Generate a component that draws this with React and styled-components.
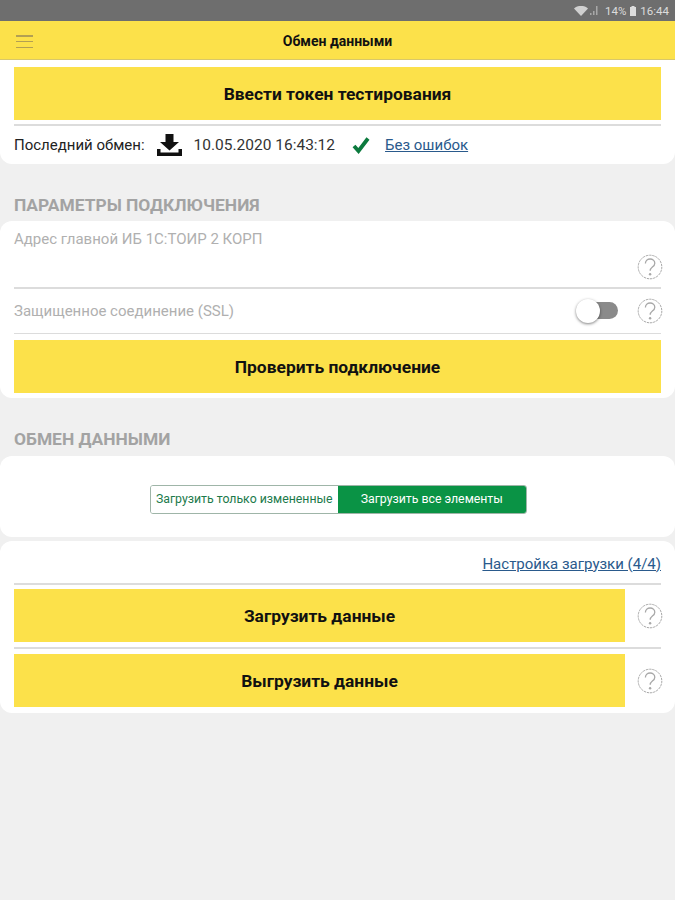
import React from 'react';
import styled, { createGlobalStyle } from 'styled-components';

const COLORS = {
  YELLOW: '#fce14a',
  PAGE: '#f0f0f0',
  LINE: '#dcdcdc',
  GREEN: '#0a9345',
  LINK: '#2a5a8c',
};

const GlobalStyle = createGlobalStyle`
  html, body {
    margin: 0;
    padding: 0;
    background: ${COLORS.PAGE};
  }
  * {
    box-sizing: border-box;
  }
  body {
    font-family: Roboto, "Liberation Sans", sans-serif;
  }
`;

const Screen = styled.div`
  width: 675px;
  height: 900px;
  overflow: hidden;
  display: flex;
  flex-direction: column;
  background: ${COLORS.PAGE};
`;

const StatusBar = styled.div`
  height: 21px;
  flex: none;
  background: #6e6e6e;
  color: #dcdcdc;
  display: flex;
  align-items: center;
  justify-content: flex-end;
  padding: 0 6px 0 0;
  font-size: 11.5px;
`;

const StatusWifi = styled.span`
  display: flex;
  margin-right: 2px;
`;

const StatusSignal = styled.span`
  display: flex;
  margin-right: 6px;
`;

const StatusBattery = styled.span`
  display: flex;
  margin: 0 4px;
`;

const Header = styled.header`
  height: 39px;
  flex: none;
  padding-top: 2px;
  background: ${COLORS.YELLOW};
  border-bottom: 1px solid #d8c76a;
  display: flex;
  align-items: center;
  justify-content: center;
  position: relative;
  font-size: 14px;
  font-weight: 700;
  color: #111;
`;

const MenuButton = styled.div`
  position: absolute;
  left: 16px;
  top: 14px;
  width: 17px;
  height: 13px;
  display: flex;
  flex-direction: column;
  justify-content: space-between;

  span {
    height: 1.5px;
    background: #b3a052;
  }
`;

const Card = styled.section`
  background: #fff;
  border-radius: ${props => props.$radius || '12px'};
  padding: ${props => props.$padding || '0 14px'};
  height: ${props => props.$height};
  margin-top: ${props => props.$top || '0'};
  flex: none;
`;

const Heading = styled.h2`
  margin: ${props => props.$margin};
  padding: 0 14px;
  height: 18px;
  line-height: 18px;
  font-size: 17.4px;
  font-weight: 700;
  color: #a3a3a3;
  flex: none;
`;

const BigButton = styled.div`
  height: 53px;
  flex: ${props => (props.$grow ? '1' : 'none')};
  background: ${COLORS.YELLOW};
  display: flex;
  align-items: center;
  justify-content: center;
  font-size: 17.4px;
  font-weight: 700;
  color: #111;
`;

const Divider = styled.div`
  height: 1.5px;
  background: ${COLORS.LINE};
  margin: ${props => props.$margin || '0'};
`;

const ExchangeRow = styled.div`
  height: 39px;
  display: flex;
  align-items: center;
  font-size: 15px;
  color: #222;
`;

const DownloadSlot = styled.span`
  display: flex;
  margin: 0 12px;
`;

const ExchangeDate = styled.span`
  margin-right: 17px;
  font-size: 15.5px;
  color: #333;
`;

const CheckSlot = styled.span`
  display: flex;
  margin-right: 15px;
`;

const TextLink = styled.span`
  font-size: 15px;
  color: ${COLORS.LINK};
  text-decoration: underline;
`;

const FieldLabel = styled.div`
  font-size: 15px;
  color: #b0b0b0;
`;

const AddressField = styled.div`
  height: 66px;
  padding-top: 9px;
  position: relative;
`;

const AddressHelp = styled.div`
  position: absolute;
  right: -2px;
  top: 33px;
`;

const SslRow = styled.div`
  height: 44px;
  display: flex;
  align-items: center;
  justify-content: space-between;
`;

const SslControls = styled.div`
  display: flex;
  align-items: center;
  gap: 19px;
  margin-right: -2px;
`;

const SwitchTrack = styled.div`
  position: relative;
  width: 32px;
  height: 17px;
  margin-left: 10px;
  border-radius: 9px;
  background: #8a8a8a;
`;

const SwitchThumb = styled.div`
  position: absolute;
  left: -10px;
  top: -3px;
  width: 24px;
  height: 24px;
  border-radius: 50%;
  background: #fff;
  box-shadow: 0 1px 3px rgba(0, 0, 0, 0.5);
`;

const SegmentWrap = styled.div`
  height: 81px;
  display: flex;
  align-items: center;
  justify-content: center;
`;

const Segment = styled.div`
  display: flex;
  width: 377px;
  height: 29px;
  margin-top: 5px;
  margin-left: 1px;
  border: 1px solid #9fb5a8;
  border-radius: 3px;
  overflow: hidden;
`;

const SegmentItem = styled.div`
  width: ${props => props.$width};
  display: flex;
  align-items: center;
  justify-content: center;
  font-size: 12.3px;
  white-space: nowrap;
  background: ${props => (props.$active ? COLORS.GREEN : '#fff')};
  color: ${props => (props.$active ? '#fff' : '#1c7a4b')};
`;

const LinkRow = styled.div`
  height: 42px;
  padding-top: 3px;
  display: flex;
  align-items: center;
  justify-content: flex-end;
`;

const ActionRow = styled.div`
  display: flex;
  align-items: center;
  gap: 12px;
  margin-right: -2px;
`;

const HelpIcon = () => (
  <svg width="26" height="26" viewBox="0 0 26 26" fill="none">
    <circle cx="13" cy="13" r="11.8" stroke="#a8a8a8" strokeWidth="1" strokeDasharray="2.4 0.8" />
    <path
      d="M8.400 9.600c0-2.700 2.100-4.600 4.700-4.600s4.700 1.800 4.700 4.200c0 1.900-1.100 2.900-2.400 3.900-1.400 1.100-2.200 1.900-2.200 3.700"
      stroke="#a8a8a8"
      strokeWidth="1.300"
    />
    <circle cx="13.100" cy="20.300" r="1.200" fill="#a8a8a8" />
  </svg>
);

const DownloadIcon = () => (
  <svg width="25" height="22" viewBox="0 0 25 22" fill="#111">
    <path d="M8.500 0h8v8h5.500l-9.500 8.500L3 8h5.500z" />
    <path d="M0 15h3.500v3.500h18V15H25v7H0z" />
  </svg>
);

const CheckIcon = () => (
  <svg width="18" height="17" viewBox="0 0 18 17" fill="none">
    <path d="M2 9l4.500 5L16 1.500" stroke="#0c7a3e" strokeWidth="3.800" />
  </svg>
);

const WifiIcon = () => (
  <svg width="14" height="10" viewBox="0 0 14 10" fill="#d0d0d0">
    <path d="M0 2.500C4-1 10-1 14 2.500L7 10z" />
  </svg>
);

const SignalIcon = () => (
  <svg width="9" height="9" viewBox="0 0 9 9" fill="#a8a8a8">
    <path d="M0 7h1.500v2H0zM3 5h1.500v4H3zM6 0h1.500v9H6z" />
  </svg>
);

const BatteryIcon = () => (
  <svg width="6" height="10" viewBox="0 0 6 10" fill="#dcdcdc">
    <path d="M1.500 0h3v1H6v9H0V1h1.500z" />
  </svg>
);

export default function App() {
  return (
    <Screen>
      <GlobalStyle />
      <StatusBar>
        <StatusWifi><WifiIcon /></StatusWifi>
        <StatusSignal><SignalIcon /></StatusSignal>
        <span>14%</span>
        <StatusBattery><BatteryIcon /></StatusBattery>
        <span>16:44</span>
      </StatusBar>
      <Header>
        <MenuButton>
          <span />
          <span />
          <span />
        </MenuButton>
        Обмен данными
      </Header>

      <Card $radius="0 0 12px 12px" $height="104px" $padding="7px 14px 0">
        <BigButton>Ввести токен тестирования</BigButton>
        <Divider $margin="4px 0 0" />
        <ExchangeRow>
          Последний обмен:
          <DownloadSlot><DownloadIcon /></DownloadSlot>
          <ExchangeDate>10.05.2020 16:43:12</ExchangeDate>
          <CheckSlot><CheckIcon /></CheckSlot>
          <TextLink>Без ошибок</TextLink>
        </ExchangeRow>
      </Card>

      <Heading $margin="32px 0 7px">ПАРАМЕТРЫ ПОДКЛЮЧЕНИЯ</Heading>

      <Card $height="177px">
        <AddressField>
          <FieldLabel>Адрес главной ИБ 1С:ТОИР 2 КОРП</FieldLabel>
          <AddressHelp>
            <HelpIcon />
          </AddressHelp>
        </AddressField>
        <Divider />
        <SslRow>
          <FieldLabel>Защищенное соединение (SSL)</FieldLabel>
          <SslControls>
            <SwitchTrack>
              <SwitchThumb />
            </SwitchTrack>
            <HelpIcon />
          </SslControls>
        </SslRow>
        <Divider $margin="0 0 6px" />
        <BigButton>Проверить подключение</BigButton>
      </Card>

      <Heading $margin="32px 0 8px">ОБМЕН ДАННЫМИ</Heading>

      <Card $height="81px">
        <SegmentWrap>
          <Segment>
            <SegmentItem $width="188px">Загрузить только измененные</SegmentItem>
            <SegmentItem $width="188px" $active>Загрузить все элементы</SegmentItem>
          </Segment>
        </SegmentWrap>
      </Card>

      <Card $height="172px" $top="4px">
        <LinkRow>
          <TextLink>Настройка загрузки (4/4)</TextLink>
        </LinkRow>
        <Divider $margin="0 0 4.500px" />
        <ActionRow>
          <BigButton $grow>Загрузить данные</BigButton>
          <HelpIcon />
        </ActionRow>
        <Divider $margin="5px 0 5.500px" />
        <ActionRow>
          <BigButton $grow>Выгрузить данные</BigButton>
          <HelpIcon />
        </ActionRow>
      </Card>
    </Screen>
  );
}
